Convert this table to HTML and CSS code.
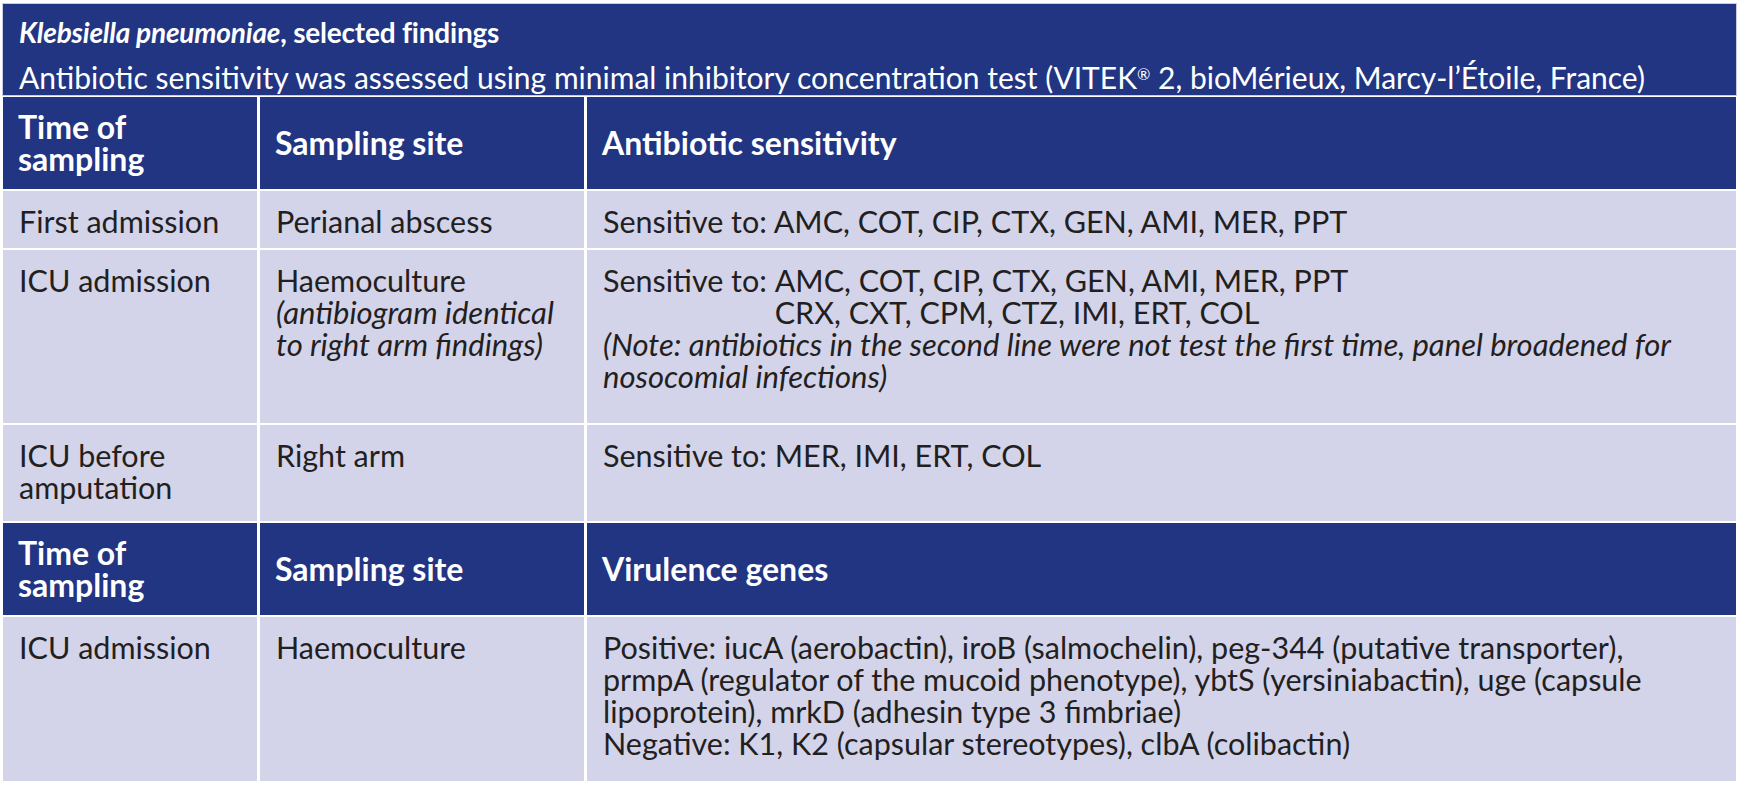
FILE: index.html
```html
<!DOCTYPE html>
<html lang="en">
<head>
<meta charset="utf-8">
<title>Klebsiella pneumoniae, selected findings</title>
<link rel="stylesheet" href="styles.css">
</head>
<body>
<div class="tbl">
  <div class="cap">
    <div class="cap-title"><i>Klebsiella pneumoniae</i>, selected findings</div>
    <div class="cap-sub">Antibiotic sensitivity was assessed using minimal inhibitory concentration test (VITEK<span class="reg">®</span> 2, bioMérieux, Marcy-l’Étoile, France)</div>
  </div>

  <div class="th">Time of<br>sampling</div>
  <div class="th">Sampling site</div>
  <div class="th">Antibiotic sensitivity</div>

  <div class="td r1">First admission</div>
  <div class="td r1">Perianal abscess</div>
  <div class="td r1">Sensitive to: AMC, COT, CIP, CTX, GEN, AMI, MER, PPT</div>

  <div class="td r2">ICU admission</div>
  <div class="td r2">Haemoculture<br><i class="it">(antibiogram identical<br>to right arm findings)</i></div>
  <div class="td r2">
    <div class="sens"><span>Sensitive to:&nbsp;</span><span>AMC, COT, CIP, CTX, GEN, AMI, MER, PPT<br>CRX, CXT, CPM, CTZ, IMI, ERT, COL</span></div>
    <div class="note">(Note: antibiotics in the second line were not test the first time, panel broadened for<br>nosocomial infections)</div>
  </div>

  <div class="td r3">ICU before<br>amputation</div>
  <div class="td r3">Right arm</div>
  <div class="td r3">Sensitive to: MER, IMI, ERT, COL</div>

  <div class="th">Time of<br>sampling</div>
  <div class="th">Sampling site</div>
  <div class="th">Virulence genes</div>

  <div class="td r4">ICU admission</div>
  <div class="td r4">Haemoculture</div>
  <div class="td r4">Positive: iucA (aerobactin), iroB (salmochelin), peg-344 (putative transporter),<br>prmpA (regulator of the mucoid phenotype), ybtS (yersiniabactin), uge (capsule<br>lipoprotein), mrkD (adhesin type 3 fimbriae)<br>Negative: K1, K2 (capsular stereotypes), clbA (colibactin)</div>
</div>
</body>
</html>
```

FILE: styles.css
```css
html, body {
  margin: 0;
  padding: 0;
  background: #ffffff;
}

body {
  font-family: Lato, "Open Sans", sans-serif;
  font-size: 30.5px;
  line-height: 32px;
  color: #231f20;
}

.tbl {
  display: grid;
  grid-template-columns: 254px 324px 1fr;
  gap: 2px 3px;
  padding: 4px 3px 0 3px;
  background: #ffffff;
}

.cap {
  grid-column: 1 / -1;
  background: #213582;
  color: #ffffff;
  padding: 12px 15px 2px 16px;
  box-shadow: 0 0 0 1px #c7cce2;
  font-size: 30px;
}

.cap-title {
  font-weight: 700;
  font-size: 28px;
  letter-spacing: -0.2px;
  margin-bottom: 13px;
}

.cap-sub {
  font-weight: 400;
}

.reg {
  font-size: 16px;
  vertical-align: 9px;
  line-height: 0;
}

.th {
  background: #213582;
  color: #ffffff;
  font-weight: 700;
  font-size: 32px;
  padding: 14px 15px;
  display: flex;
  align-items: center;
  min-height: 64px;
}

.td {
  background: #d3d4ea;
  padding: 14px 15px 11px 16px;
}

.it {
  font-size: 31px;
}

.r2 {
  padding-bottom: 31px;
}

.r3 {
  padding-bottom: 18px;
}

.r4 {
  padding-bottom: 22px;
}

.sens {
  display: flex;
}

.note {
  font-style: italic;
  font-size: 31px;
}
```
